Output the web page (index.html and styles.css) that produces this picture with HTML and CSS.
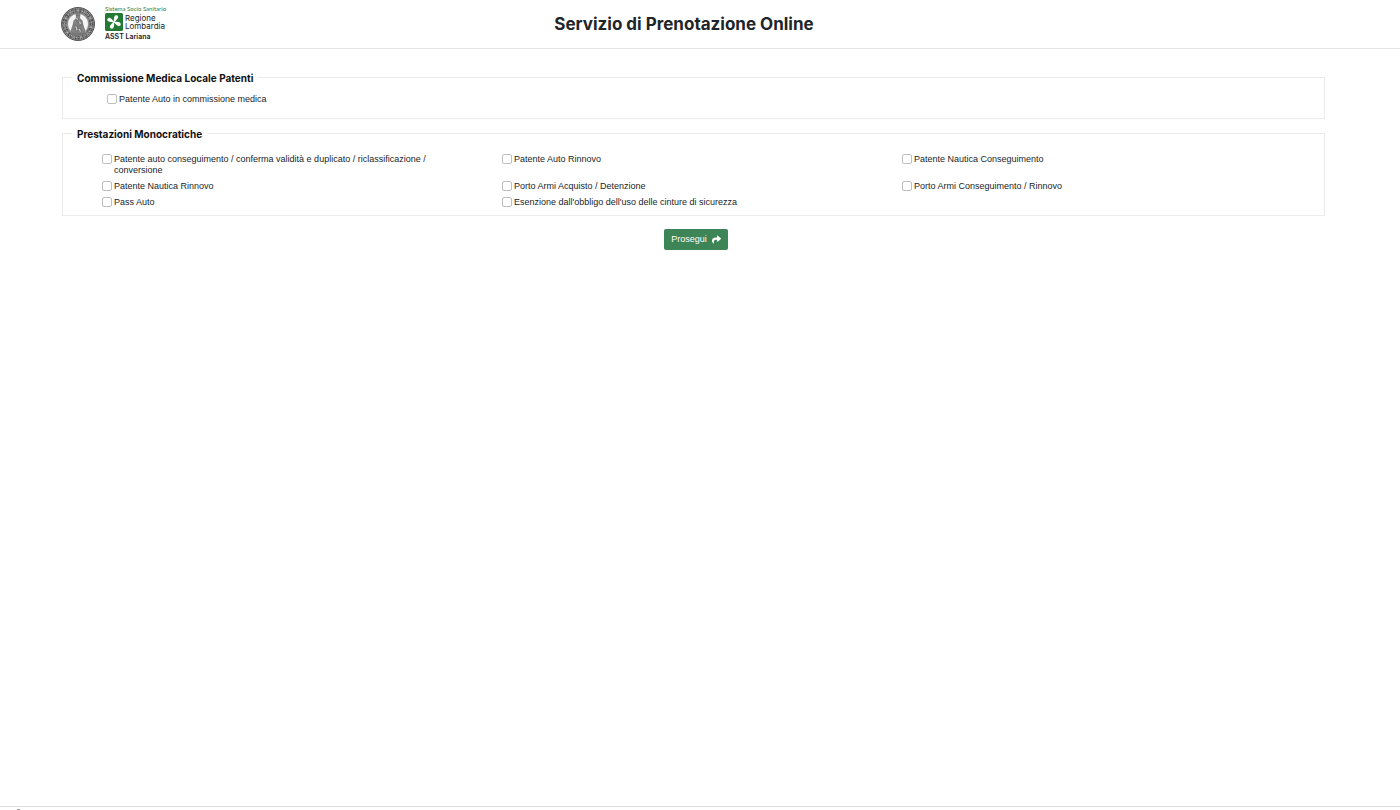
FILE: index.html
```html
<!DOCTYPE html>
<html lang="it">
<head>
    <meta charset="UTF-8">
    <meta name="viewport" content="width=device-width, initial-scale=1.0">
    <title>Servizio di Prenotazione Online</title>
    <link rel="stylesheet" href="styles.css">
</head>
<body>
    <header class="header">
        <div class="logos">
            <svg class="seal" viewBox="0 0 68 68" aria-hidden="true">
                <circle cx="34" cy="34" r="33" fill="#8d8d8d" stroke="#555" stroke-width="2"/>
                <circle cx="34" cy="34" r="27" fill="none" stroke="#4f4f4f" stroke-width="8" stroke-dasharray="3 2 1 3 4 2"/>
                <circle cx="34" cy="34" r="27" fill="none" stroke="#c4c4c4" stroke-width="3" stroke-dasharray="1 4 2 3"/>
                <circle cx="34" cy="34" r="21" fill="#f4f4f4" stroke="#666" stroke-width="1"/>
                <path d="M34 11l4 4-1 7 5 5 2 9 4 12-5 6H25l-5-6 4-12 2-9 5-5-1-7z" fill="#858585" stroke="#505050" stroke-width="1"/>
                <path d="M31 17h6M29 27l5 5 6-5M27 36l7 4 7-5M25 45l8-3 10 5M34 24v27M28 33v18M40 33v18" fill="none" stroke="#666" stroke-width="1"/>
                <path d="M31 22l2 3M30 39l2 7M37 29l2 5M36 44l3 5" stroke="#d8d8d8" stroke-width="2"/>
                <path d="M19 55h30" stroke="#777" stroke-width="3"/>
            </svg>
            <div class="region">
                <span class="region-system">Sistema Socio Sanitario</span>
                <div class="region-row">
                    <svg class="region-mark" viewBox="0 0 36 36" aria-hidden="true">
                        <rect width="36" height="36" rx="3" fill="#237a35"/>
                        <g fill="#fff" transform="rotate(25 18 18)">
                            <path d="M18 19C15 13 13 7 15 5c2-2 4-2 6 0 2 2 0 8-3 14z"/>
                            <path d="M17 18c6-3 12-5 14-3 2 2 2 4 0 6-2 2-8 0-14-3z"/>
                            <path d="M18 17c3 6 5 12 3 14-2 2-4 2-6 0-2-2 0-8 3-14z"/>
                            <path d="M19 18c-6 3-12 5-14 3-2-2-2-4 0-6 2-2 8 0 14 3z"/>
                        </g>
                    </svg>
                    <div class="region-name">
                        <span>Regione</span>
                        <span>Lombardia</span>
                    </div>
                </div>
                <span class="region-asst">ASST Lariana</span>
            </div>
        </div>
        <h1 class="title">Servizio di Prenotazione Online</h1>
    </header>

    <main class="content">
        <form>
            <fieldset class="group group-single">
                <legend>Commissione Medica Locale Patenti</legend>
                <label class="option"><input type="checkbox" name="commissione">Patente Auto in commissione medica</label>
            </fieldset>

            <fieldset class="group group-grid">
                <legend>Prestazioni Monocratiche</legend>
                <div class="options">
                    <label class="option"><input type="checkbox" name="conseguimento">Patente auto conseguimento / conferma validità e duplicato / riclassificazione / conversione</label>
                    <label class="option"><input type="checkbox" name="rinnovo">Patente Auto Rinnovo</label>
                    <label class="option"><input type="checkbox" name="nauticaConseguimento">Patente Nautica Conseguimento</label>
                    <label class="option"><input type="checkbox" name="nauticaRinnovo">Patente Nautica Rinnovo</label>
                    <label class="option"><input type="checkbox" name="armiAcquisto">Porto Armi Acquisto / Detenzione</label>
                    <label class="option"><input type="checkbox" name="armiRinnovo">Porto Armi Conseguimento / Rinnovo</label>
                    <label class="option"><input type="checkbox" name="pass">Pass Auto</label>
                    <label class="option"><input type="checkbox" name="cinture">Esenzione dall'obbligo dell'uso delle cinture di sicurezza</label>
                </div>
            </fieldset>

            <div class="actions">
                <button type="submit" class="btn">
                    Prosegui
                    <svg class="btn-icon" viewBox="0 0 512 512" aria-hidden="true">
                        <path fill="currentColor" d="M503.7 189.8L327.7 37.9C312.3 24.5 288 35.300 288 56v80C127.400 137.900 0 170.100 0 322.300c0 61.400 39.600 122.300 83.300 154.100 13.700 9.900 33.100-2.500 28.100-18.600C66.100 312.800 132.900 274.300 288 272.100V360c0 20.700 24.300 31.500 39.700 18.200l176-152c11.100-9.600 11.100-26.800 0-36.400z"/>
                    </svg>
                </button>
            </div>
        </form>
    </main>

    <footer class="footer"><span class="footer-mark"></span></footer>
</body>
</html>
```

FILE: styles.css
```css
* {
    box-sizing: border-box;
}
body {
    display: flex;
    flex-direction: column;
    min-height: 100vh;
    margin: 0;
    background-color: #fff;
    color: #212529;
    font-family: "Liberation Sans", Arial, sans-serif;
    font-size: 9px;
    line-height: 11px;
}
.header {
    display: grid;
    grid-template-columns: 1fr auto 1fr;
    align-items: center;
    padding: 5px 93px 6px 61px;
    border-bottom: 1px solid #e4e4e4;
}
.logos {
    display: flex;
    align-items: center;
    gap: 10px;
}
.seal {
    width: 34px;
    height: 34px;
}
.region {
    display: flex;
    flex-direction: column;
    color: #222;
    font-family: Inter, sans-serif;
    white-space: nowrap;
}
.region-system {
    color: #2f7d46;
    font-family: Lato, sans-serif;
    font-size: 6px;
    line-height: 8px;
}
.region-row {
    display: flex;
    align-items: center;
    gap: 2px;
}
.region-mark {
    width: 18px;
    height: 18px;
}
.region-name {
    display: flex;
    flex-direction: column;
    font-size: 8px;
    line-height: 8px;
}
.region-asst {
    font-size: 7px;
    font-weight: 600;
    line-height: 11px;
}
.title {
    margin: 0;
    font-family: Inter, sans-serif;
    font-size: 17px;
    font-weight: 700;
    line-height: 22px;
}
.content {
    flex: 1;
    padding: 19px 75px 0 62px;
}
.group {
    min-width: 0;
    margin: 0 0 5px;
    border: 1px solid #ebebeb;
}
.group legend {
    padding: 3px 5px 0;
    color: #111;
    font-family: Inter, sans-serif;
    font-size: 10px;
    font-weight: 700;
    line-height: 15px;
}
.group-single {
    padding: 8px 9px 13px;
}
.group-single .option {
    margin-left: 35px;
}
.group-grid {
    padding: 12px 9px 7px;
}
.options {
    display: grid;
    grid-template-columns: repeat(3, 1fr);
    gap: 5px 40px;
    padding: 0 53px 0 30px;
}
.option {
    display: flex;
    align-items: flex-start;
    gap: 2px;
}
.option input {
    appearance: none;
    flex: none;
    width: 10px;
    height: 10px;
    margin: 0;
    border: 1px solid #bfbfbf;
    border-radius: 2px;
    background-color: #fff;
}
.option input:checked {
    background-color: #3d8456;
}
.actions {
    display: flex;
    justify-content: center;
    padding: 8px 0 0 5px;
}
.btn {
    display: flex;
    align-items: center;
    gap: 5px;
    padding: 5px 7px;
    border: 0;
    border-radius: 2px;
    background-color: #3d8456;
    color: #fff;
    font: inherit;
    cursor: pointer;
}
.btn-icon {
    width: 9px;
    height: 9px;
}
.footer {
    display: flex;
    align-items: flex-end;
    height: 4px;
    padding-left: 17px;
    border-top: 1px solid #dedede;
}
.footer-mark {
    width: 3px;
    height: 1px;
    background-color: #999;
}
```
